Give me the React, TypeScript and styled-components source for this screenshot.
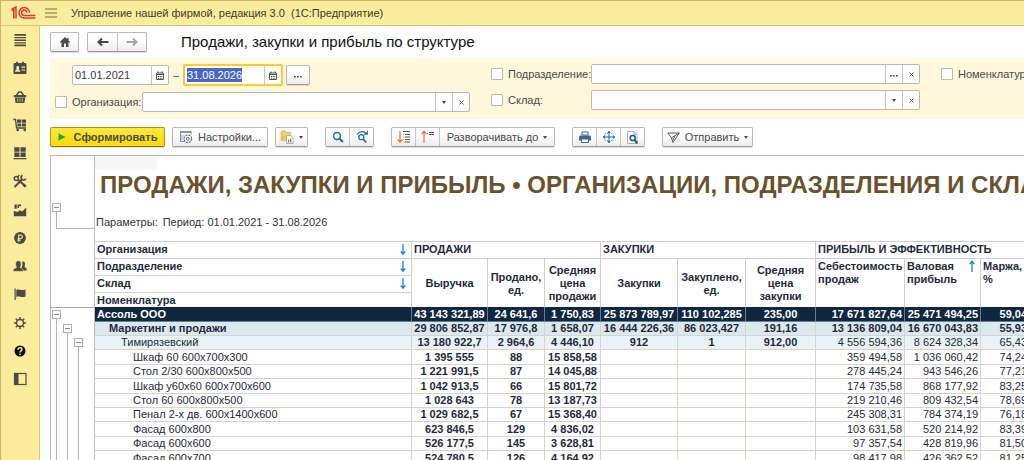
import React, { useEffect, useRef } from 'react';
import styled, { createGlobalStyle, css } from 'styled-components';

const GlobalStyle = createGlobalStyle`
  *, *::before, *::after { box-sizing: border-box; }
  body {
    margin: 0;
    overflow: hidden;
    background: #fff;
    color: #4a4a4a;
    font: 11px/14px "Liberation Sans", Arial, sans-serif;
  }
  button, input { font: inherit; color: inherit; margin: 0; }
  ul { list-style: none; margin: 0; padding: 0; }
`;

/* ---------- application frame ---------- */

const Shell = styled.div`
  display: grid;
  grid-template: 26px minmax(0, 1fr) / 40px minmax(0, 1fr);
  height: 100vh;
`;

const TopBar = styled.header`
  grid-column: 1 / -1;
  display: flex;
  align-items: center;
  padding-left: 10px;
  background: #faeb9d;
  border: solid #cbb463;
  border-width: 1px 0 1px 1px;
  border-bottom-color: #d9c67c;
`;

const MenuButton = styled.button`
  display: flex;
  margin: 0 14px 0 9px;
  padding: 0;
  border: 0;
  background: none;
`;

const AppName = styled.span`
  font-size: 11px;
  color: #3f3c30;
  white-space: pre;
`;

const Sidebar = styled.nav`
  background: #faeb9d;
  border: solid #cbb463;
  border-width: 0 1px;
  border-right-color: #d9c67c;
`;

const SideItem = styled.li`
  display: flex;
  height: 28px;
  &:nth-child(4n + 2) { margin-bottom: 1px; }
`;

const SideLink = styled.a`
  display: flex;
  flex: 1;
  align-items: center;
  justify-content: center;
  color: #4b4a45;
`;

const Main = styled.main`
  display: flex;
  flex-direction: column;
  min-width: 0;
  min-height: 0;
  padding: 6px 0 0 10px;
  overflow: hidden;
`;

const Row = styled.div<{ $gap?: number }>`
  display: flex;
  flex-shrink: 0;
  align-items: center;
  gap: ${(p) => p.$gap ?? 0}px;
`;

const Heading = styled.h1`
  margin: 0 0 0 26px;
  font-size: 15px;
  line-height: 20px;
  font-weight: 400;
  color: #111;
  white-space: nowrap;
`;

/* ---------- buttons ---------- */

const raised = css`
  border: 1px solid #b9b9b9;
  border-bottom-color: #9a9a9a;
  border-radius: 2px;
  background: linear-gradient(#fff 40%, #ececec);
  box-shadow: 0 1px 1px #0002;
`;

const Button = styled.button<{ $width: number; $primary?: boolean }>`
  ${raised}
  display: flex;
  flex-shrink: 0;
  align-items: center;
  justify-content: center;
  gap: 5px;
  width: ${(p) => p.$width}px;
  height: 20px;
  padding: 0;
  font-size: 11px;
  white-space: nowrap;
  ${(p) =>
    p.$primary &&
    css`
      gap: 8px;
      font-weight: 700;
      border-color: #a8961c;
      border-bottom-color: #86770f;
      background: linear-gradient(#ffe83a, #f8da0c);
    `}
`;

const ButtonGroup = styled.div`
  ${raised}
  display: flex;
  flex-shrink: 0;
  height: 20px;
  & > button {
    height: 18px;
    border: 0;
    border-radius: 0;
    background: none;
    box-shadow: none;
  }
  & > button + button { border-left: 1px solid #c4c4c4; }
`;

const Toolbar = styled.div`
  display: flex;
  flex-shrink: 0;
  gap: 17px;
  margin-top: 8px;
`;

const Caret = styled.span`
  border: solid transparent;
  border-width: 3px 2px 0;
  border-top-color: currentColor;
`;

/* ---------- filters ---------- */

const Filters = styled.form`
  display: flex;
  flex-shrink: 0;
  gap: 21px;
  height: 61px;
  margin-top: 6px;
  padding: 6px 0 0 5px;
  overflow: hidden;
  background: #fff8dc;
`;

const FilterColumn = styled.div<{ $width: number }>`
  display: flex;
  flex: 0 0 ${(p) => p.$width}px;
  flex-direction: column;
  gap: 6px;
`;

const DateRow = styled.div`
  display: flex;
  align-items: center;
  gap: 3px;
  height: 22px;
  padding-left: 17px;
`;

const FieldRow = styled.div`
  display: flex;
  align-items: center;
  height: 20px;
`;

const Check = styled.input`
  appearance: none;
  flex: none;
  width: 12px;
  height: 12px;
  border: 1px solid #bdb9aa;
  border-radius: 1px;
  background: #fff;
`;

const FieldLabel = styled.label<{ $width: number }>`
  flex: 0 0 ${(p) => p.$width}px;
  padding-left: 5px;
  white-space: nowrap;
`;

const Field = styled.div<{ $width?: number; $active?: boolean }>`
  display: flex;
  flex: ${(p) => (p.$width ? `0 0 ${p.$width}px` : '1 1 0')};
  min-width: 0;
  height: ${(p) => (p.$active ? 22 : 20)}px;
  border: ${(p) => (p.$active ? '2px solid #fbcc2f' : '1px solid #bcb9ad')};
  border-radius: 2px;
  background: #fff;
  input {
    flex: 1 1 0;
    min-width: 0;
    padding: 0 2px;
    border: 0;
    outline: 0;
    background: none;
    color: #3c3c3c;
  }
  input::selection { background: #4b66c4; color: #fff; }
  button {
    display: flex;
    align-items: center;
    justify-content: center;
    width: 17px;
    padding: 0;
    border: 0;
    border-left: 1px solid #c9c6bb;
    background: none;
  }
`;

const Dash = styled.span`
  width: 8px;
  text-align: center;
`;

/* ---------- report sheet ---------- */

const Sheet = styled.section`
  display: flex;
  flex: 1 1 0;
  min-height: 0;
  margin-top: 8px;
  overflow: hidden;
  border: solid #bdbdbd;
  border-width: 1px 0 0 1px;
`;

const Gutter = styled.div`
  display: flex;
  flex: 0 0 44px;
  flex-direction: column;
  border-right: 1px solid #bdbdbd;
`;

const GutterTop = styled.div`
  height: 152px;
  padding: 47px 0 0 1px;
  border-bottom: 1px solid #a9a9a9;
`;

const Elbow = styled.div`
  height: 17px;
  margin-left: 4px;
  border: solid #b5b5b5;
  border-width: 0 0 1px 1px;
`;

const Branches = styled.div`
  display: flex;
  flex: 1;
  gap: 2px;
  padding: 2px 0 0 1px;
`;

const Branch = styled.div<{ $level: number }>`
  display: flex;
  flex-direction: column;
  align-items: center;
  padding-top: ${(p) => p.$level * 14}px;
  &::after {
    content: '';
    flex: 1;
    width: 1px;
    background: #b5b5b5;
  }
`;

const Toggle = styled.button`
  display: flex;
  align-items: center;
  width: 9px;
  height: 9px;
  padding: 0 1px;
  border: 1px solid #b0b0b0;
  background: #fff;
  &::before {
    content: '';
    flex: 1;
    height: 1px;
    background: #8a8a8a;
  }
`;

const Report = styled.div`
  flex: 1 1 0;
  min-width: 0;
  overflow: hidden;
  white-space: nowrap;
`;

const Corner = styled.div`
  width: 62px;
  height: 14px;
  background: #f7f7f7;
`;

const ReportTitle = styled.h2`
  margin: 0 0 14px 5px;
  font-size: 24px;
  line-height: 30px;
  color: #6b522e;
`;

const Params = styled.div`
  display: flex;
  gap: 5px;
  height: 16px;
  margin: 0 0 11px 1px;
  line-height: 16px;
  color: #333;
`;

const Table = styled.table`
  table-layout: fixed;
  width: 935px;
  border-collapse: separate;
  border-spacing: 0;
  border-top: 1px solid #cfcfcf;
  color: #1f2b3a;
  line-height: 13px;
`;

const HeadCell = styled.th<{ $align?: 'left' | 'center'; $last?: boolean }>`
  height: ${(p) => (p.$last ? 14 : 17)}px;
  padding: 1px 2px 0;
  border: solid #cfcfcf;
  border-width: 0 1px ${(p) => (p.$last ? 0 : 1)}px 0;
  text-align: ${(p) => p.$align ?? 'left'};
  vertical-align: ${(p) => (p.$align === 'center' ? 'middle' : 'top')};
  white-space: pre-line;
`;

const HeadLabel = styled.span`
  display: flex;
  justify-content: space-between;
  padding-right: 3px;
`;

const levels = [
  { bg: '#10273f', fg: '#fff', line: '#6d7a88' },
  { bg: '#dae8f2', fg: '#1f2b3a', line: '#d8d4c8' },
  { bg: '#ebf2f7', fg: '#1f2b3a', line: '#d8d4c8' },
  { bg: '#fff', fg: '#1f2b3a', line: '#d8d4c8' },
];

const BodyRow = styled.tr<{ $level: number }>`
  height: 14px;
  background: ${(p) => levels[p.$level].bg};
  color: ${(p) => levels[p.$level].fg};
  font-weight: ${(p) => (p.$level < 2 ? 700 : 400)};
  &:nth-child(5n + 1), &:nth-child(5n + 4) { height: 15px; }
  th {
    padding: 0 0 0 ${(p) => 2 + p.$level * 12}px;
    font-weight: inherit;
    text-align: left;
  }
  th, td {
    border: solid ${(p) => levels[p.$level].line};
    border-width: 0 1px 1px 0;
  }
`;

const Cell = styled.td<{ $profit: boolean }>`
  padding: ${(p) => (p.$profit ? '0 2px 0 0' : '0')};
  text-align: ${(p) => (p.$profit ? 'right' : 'center')};
  font-weight: ${(p) => (p.$profit ? 'inherit' : 700)};
`;

/* ---------- icons ---------- */

const Svg = ({ w = 14, h = w, children }: { w?: number; h?: number; children: React.ReactNode }) => (
  <svg width={w} height={h} viewBox={`0 0 ${w} ${h}`} fill="none" stroke="none" aria-hidden="true">
    {children}
  </svg>
);

const sideIcons: [string, React.ReactNode][] = [
  ['Главное', <path d="M1.500 1H13v1.700H1.500zM1.500 4H13v1.300H1.500zM1.500 6.600H13v1.300H1.500zM1.500 9.200H13v1.300H1.500zM1.500 11.600H13v1.600H1.500z" fill="currentColor" />],
  ['CRM', <>
    <path d="M2 2h1V.8h2V2h4V.8h2V2h1.500a1 1 0 0 1 1 1v9a1 1 0 0 1-1 1H1.500a1 1 0 0 1-1-1V3a1 1 0 0 1 1-1z" fill="currentColor" />
    <path d="M2 10.800c0-1.600 1-1.700 1.700-2C2.900 7 3.100 5 4.700 5s1.800 2 1 3.800c.7.3 1.500.4 1.500 2zM8.500 5.600H12v1.200H8.500zM8.500 8.400H12v1.200H8.500z" fill="#faeb9d" />
  </>],
  ['Продажи', <>
    <path d="M.8 5h12.400v2.200H.8zM1.800 7.800h10.400L11.400 13H2.600z" fill="currentColor" />
    <path d="M3.500 5.500 5.700 2h2.600l2.200 3.500" stroke="currentColor" strokeWidth="1.500" />
    <path d="M4.700 8.500v3.500M7 8.500v3.500M9.300 8.500v3.500" stroke="#faeb9d" strokeWidth=".7" />
  </>],
  ['Закупки', <>
    <path d="M.3 1.500H2.500l1 8.500H13" stroke="currentColor" strokeWidth="1.300" />
    <path d="M4 1.500h4v3.200H4zM8.700 1.500H13v3.200H8.700zM4.300 5.400H8v3.200H4.300zM8.700 5.400H13v3.200H8.700z" fill="currentColor" />
    <circle cx="4.700" cy="12" r="1.300" fill="currentColor" />
    <circle cx="11.700" cy="12" r="1.300" fill="currentColor" />
  </>],
  ['Склад', <path d="M1.300 1.200h5.200v4.500H1.300zM7.500 1.200h5.200v4.500H7.500zM1.300 6.500h5.200V11H1.300zM7.500 6.500h5.200V11H7.500zM.5 12h13v1.300H.5z" fill="currentColor" />],
  ['Работы', <>
    <path d="M1.500 13 9.500 5M5 5.500l7.500 7" stroke="currentColor" strokeWidth="1.900" />
    <path d="M9.500 1.300a2.500 2.500 0 1 0 3.300 3.500" stroke="currentColor" strokeWidth="1.700" />
    <circle cx="3.300" cy="4.500" r="2" stroke="currentColor" strokeWidth="1.500" />
    <path d="M4.500 3 6.500 1" stroke="currentColor" strokeWidth="1.500" />
    <path d="m9.500 11.500 2-2 2 2.500-1.500 1.500z" fill="currentColor" />
  </>],
  ['Производство', <>
    <path d="M.8 13.200V8l3.700 1L7 7.200 9.200 8.500 13.200 4.500v8.700z" fill="currentColor" />
    <path d="M1.500 1.500h2.300v4.300H1.500zM4.500 1.500H8V3.300H6v1.800H4.500z" fill="currentColor" />
  </>],
  ['Деньги', <>
    <circle cx="7" cy="7" r="5.900" fill="currentColor" />
    <path d="M5.700 10.700V4h1.800a1.800 1.800 0 0 1 0 3.700H4.500M4.500 9.200h3.200" stroke="#faeb9d" strokeWidth="1.100" />
  </>],
  ['Персонал', <>
    <path d="M9.700 11.500c0-1.500-.2-2-1.200-2.500C9.200 7 10 5.500 9 2.800c2-.8 3.700.8 2.800 3.700-.5 1.500 0 2 1.200 2.500.7.500.7 1.500.7 2.500z" fill="currentColor" />
    <path d="M.2 12.300c0-2.500 1-2.700 3.300-3.500.5-.8-.8-1.600-.8-3.800 0-2 .9-3.300 2.600-3.300S8 3 8 5c0 2.200-1.200 3-.8 3.800 2.200.8 3 1 3 3.500z" fill="currentColor" stroke="#faeb9d" strokeWidth=".4" />
  </>],
  ['Компания', <path d="M1.500 1.500h1.200V13H1.500zM3.300 3c2.700-1.700 4.200 1.200 9.200-.5v7c-4.700 1.500-6.200-1-9.200.5z" fill="currentColor" />],
  ['Настройки', <>
    <circle cx="7" cy="7" r="3.500" stroke="currentColor" strokeWidth="1.400" />
    <path d="M7 1v2.200M7 10.800V13M1 7h2.200M10.800 7H13M2.800 2.800l1.500 1.500M9.700 9.700l1.500 1.500M2.800 11.200l1.500-1.500M9.700 4.300l1.500-1.500" stroke="currentColor" strokeWidth="1.500" />
  </>],
  ['Помощь', <>
    <circle cx="7" cy="7" r="5.500" fill="#0c0c0c" />
    <path d="M5 5.700c0-2.600 4-2.400 4-.2C9 7 7 6.800 7 8.600M7 9.600v1.300" stroke="#faeb9d" strokeWidth="1.400" />
  </>],
  ['Панель', <>
    <rect x="1.500" y="1.500" width="11.500" height="11" stroke="currentColor" strokeWidth="1.200" />
    <path d="M1 1h4.500v12H1z" fill="currentColor" />
  </>],
];

const Logo = () => (
  <svg width="25" height="14" viewBox="0 0 25 14" fill="none" stroke="#dc3a30" strokeWidth="1.500" aria-label="1С" role="img">
    <path d="M.8 4.800 2.800 3.300V12.500M.5 3.500 5 1V12.500" />
    <path d="M18.500 6.500a5.200 5.200 0 1 0-5.200 5.500H24.500M16 6.500a2.700 2.700 0 1 0-2.700 3H24.500" />
  </svg>
);

const HomeIcon = () => (
  <Svg w={12}><path d="M6 1 .8 6l.9.8.8-.7V11H5V7.500h2V11h2.500V6.100l.8.700.9-.8-1.700-1.600V1.800H8.200v1.200z" fill="#4a4a4a" /></Svg>
);
const ArrowIcon = ({ back }: { back?: boolean }) => (
  <Svg w={12}>
    <path d={back ? 'M11.500 6H2M5 2.500 1.500 6 5 9.500' : 'M.5 6H10M7 2.500 10.500 6 7 9.500'} stroke={back ? '#444' : '#a6a6a6'} strokeWidth="2" />
  </Svg>
);
const CalendarIcon = () => (
  <Svg w={8} h={9}>
    <path d="M.5 2h7v6.500h-7zM.5 3.500h7M2 .3v2M6 .3v2" stroke="#555" />
    <path d="M2 5h1v1H2zM3.700 5h1v1h-1zM5.300 5h1v1h-1zM2 6.700h1v1H2zM3.700 6.700h1v1h-1zM5.300 6.700h1v1h-1z" fill="#444" />
  </Svg>
);
const CrossIcon = () => <Svg w={5}><path d="m.5.5 4 4M4.500.5l-4 4" stroke="#555" /></Svg>;
const DotsIcon = () => <Svg w={8} h={6}><path d="M0 4h1.700v1.500H0zM3 4h1.700v1.500H3zM6 4h1.700v1.500H6z" fill="#444" /></Svg>;
const PlayIcon = () => <Svg w={8} h={8}><path d="m.5.300 7 3.700-7 3.700z" fill="#28a80f" /></Svg>;
const SettingsIcon = () => (
  <Svg w={14}>
    <path d="M6 11.500H1.500v-10h10.500v3" stroke="#7f95b0" />
    <path d="M1 1h11.500v2H1z" fill="#7f95b0" />
    <path d="M3 4.500v6M5 4.500v1M2 6h3M2 8.500h2" stroke="#b4c3d6" />
    <circle cx="8.800" cy="8.800" r="3.800" fill="#fff" stroke="#5f6469" strokeWidth="1.200" strokeDasharray="2 1" />
    <circle cx="8.800" cy="8.800" r="1.500" stroke="#5f6469" />
  </Svg>
);
const FolderIcon = () => (
  <Svg w={14}>
    <path d="M1 10.500V2l1-1h3.500l1 1.300h4.500v8.200z" fill="#efc55c" stroke="#dba93a" strokeWidth=".6" />
    <path d="M1.500 4h9" stroke="#f8e09a" />
    <path d="M6.500 5.500h4l2.500 2.200v5.800H6.500z" fill="#fff" stroke="#9aa3ab" strokeWidth=".8" />
    <path d="M8 9.500h1.300v3H8z" fill="#e2603f" /><path d="M10 8.500h1.300v4H10z" fill="#4f9b58" />
  </Svg>
);
const SearchIcon = () => (
  <Svg w={12}>
    <circle cx="5" cy="5" r="3.400" stroke="#226a9d" strokeWidth="1.500" />
    <path d="m7.500 7.500 3.500 3.500" stroke="#226a9d" strokeWidth="2" />
  </Svg>
);
const SearchNextIcon = () => (
  <Svg w={14}>
    <path d="M2 4.500C4 1 9 .7 11.500 3.300M12.300.8v3.400H9" stroke="#226a9d" strokeWidth="1.200" />
    <circle cx="6.300" cy="7.200" r="2.500" stroke="#226a9d" strokeWidth="1.300" />
    <path d="m8.200 9.200 3 3.300" stroke="#226a9d" strokeWidth="1.800" />
  </Svg>
);
const CollapseIcon = () => (
  <Svg w={14}>
    <path d="M3 1v11M.8 9.500 3 12.200l2.200-2.700" stroke="#e8743f" strokeWidth="1.200" />
    <path d="M6 1.500h7M8 4.500h5M8 7h5M8 9.500h5M8 12h5" stroke="#555" /><path d="M6 4.500h1M6 7h1M6 9.500h1M6 12h1" stroke="#aaa" />
  </Svg>
);
const ExpandIcon = () => (
  <Svg w={14}>
    <path d="M3 13V1.500M.8 4 3 1.300 5.200 4" stroke="#e8743f" strokeWidth="1.200" />
    <path d="M6 3.500h1M8 2.500h5M8 4.500h5" stroke="#555" />
  </Svg>
);
const PrintIcon = () => (
  <Svg w={12}>
    <path d="M3 1h6v3H3z" fill="#fff" stroke="#41678b" />
    <path d="M1 4.500h10l1 1V9.500H0V5.500z" fill="#41678b" />
    <path d="M2.500 8h7v3.500h-7z" fill="#fff" stroke="#41678b" />
  </Svg>
);
const FitIcon = () => (
  <Svg w={12}>
    <path d="M6 0v12M0 6h12" stroke="#226a9d" />
    <path d="m4 2 2-2 2 2M4 10l2 2 2-2M2 4 0 6l2 2M10 4l2 2-2 2" fill="#226a9d" />
    <path d="M2 2.500h8v7H2z" stroke="#7da6c5" strokeDasharray="1 1" />
  </Svg>
);
const PreviewIcon = () => (
  <Svg w={13}>
    <path d="M1.500 12.500V.5h6.500l3 3v9z" fill="#fff" stroke="#9db4c8" /><path d="M8 .5v3h3" stroke="#9db4c8" />
    <circle cx="6.700" cy="7" r="2.500" stroke="#175a8d" strokeWidth="1.500" />
    <path d="m8.500 9 3 3.500" stroke="#175a8d" strokeWidth="2" />
  </Svg>
);
const SendIcon = () => (
  <Svg w={13}>
    <path d="M.8 2h11.500L6 11.500 4.500 6.800zM4.500 6.800 12.300 2M5.700 9.500 8 5" stroke="#555" />
  </Svg>
);
const SortIcon = ({ up }: { up?: boolean }) => (
  <Svg w={6} h={12}>
    <path d={up ? 'M3 12V1.500M.8 4 3 1.300 5.200 4' : 'M3 1v10M.8 8.500 3 11.200l2.200-2.700'} stroke="#1583ee" strokeWidth="1.300" />
  </Svg>
);

/* ---------- data ---------- */

const columnWidths = [317, 76, 57, 56, 77, 68, 70, 89, 76, 49];

type Line = [level: number, name: string, ...values: string[]];

const lines: Line[] = [
  [0, 'Ассоль ООО', '43 143 321,89', '24 641,6', '1 750,83', '25 873 789,97', '110 102,285', '235,00', '17 671 827,64', '25 471 494,25', '59,04'],
  [1, 'Маркетинг и продажи', '29 806 852,87', '17 976,8', '1 658,07', '16 444 226,36', '86 023,427', '191,16', '13 136 809,04', '16 670 043,83', '55,93'],
  [2, 'Тимирязевский', '13 180 922,7', '2 964,6', '4 446,10', '912', '1', '912,00', '4 556 594,36', '8 624 328,34', '65,43'],
  [3, 'Шкаф 60 600х700х300', '1 395 555', '88', '15 858,58', '', '', '', '359 494,58', '1 036 060,42', '74,24'],
  [3, 'Стол 2/30 600х800х500', '1 221 991,5', '87', '14 045,88', '', '', '', '278 445,24', '943 546,26', '77,21'],
  [3, 'Шкаф у60х60 600х700х600', '1 042 913,5', '66', '15 801,72', '', '', '', '174 735,58', '868 177,92', '83,25'],
  [3, 'Стол 60 600х800х500', '1 028 643', '78', '13 187,73', '', '', '', '219 210,46', '809 432,54', '78,69'],
  [3, 'Пенал 2-х дв. 600х1400х600', '1 029 682,5', '67', '15 368,40', '', '', '', '245 308,31', '784 374,19', '76,18'],
  [3, 'Фасад 600х800', '623 846,5', '129', '4 836,02', '', '', '', '103 631,58', '520 214,92', '83,39'],
  [3, 'Фасад 600х600', '526 177,5', '145', '3 628,81', '', '', '', '97 357,54', '428 819,96', '81,50'],
  [3, 'Фасад 600х700', '524 780,5', '126', '4 164,92', '', '', '', '98 417,98', '426 362,52', '81,25'],
];

/* ---------- parts ---------- */

const FilterField = ({ id, label, labelWidth, dots }: { id: string; label: string; labelWidth: number; dots?: boolean }) => (
  <FieldRow>
    <Check type="checkbox" id={`${id}-on`} aria-label={label} />
    <FieldLabel htmlFor={id} $width={labelWidth}>{label}</FieldLabel>
    <Field>
      <input id={id} type="text" />
      <button type="button" aria-label="Выбрать">{dots ? <DotsIcon /> : <Caret />}</button>
      <button type="button" aria-label="Очистить"><CrossIcon /></button>
    </Field>
  </FieldRow>
);

export default function App() {
  const endDate = useRef<HTMLInputElement>(null);
  useEffect(() => {
    endDate.current?.focus();
    endDate.current?.select();
  }, []);

  return (
    <>
      <GlobalStyle />
      <Shell>
        <TopBar>
          <Logo />
          <MenuButton aria-label="Меню">
            <Svg w={12} h={10}><path d="M0 1h12M0 5h12M0 9h12" stroke="#77704a" strokeWidth="1.200" /></Svg>
          </MenuButton>
          <AppName>{'Управление нашей фирмой, редакция 3.0  (1С:Предприятие)'}</AppName>
        </TopBar>

        <Sidebar>
          <ul>
            {sideIcons.map(([name, icon]) => (
              <SideItem key={name}>
                <SideLink href="#" aria-label={name}><Svg>{icon}</Svg></SideLink>
              </SideItem>
            ))}
          </ul>
        </Sidebar>

        <Main>
          <Row $gap={8}>
            <Button $width={29} aria-label="Начальная страница"><HomeIcon /></Button>
            <ButtonGroup>
              <Button $width={29} aria-label="Назад"><ArrowIcon back /></Button>
              <Button $width={29} aria-label="Вперед"><ArrowIcon /></Button>
            </ButtonGroup>
            <Heading>Продажи, закупки и прибыль по структуре</Heading>
          </Row>

          <Filters>
            <FilterColumn $width={415}>
              <DateRow>
                <Field $width={97}>
                  <input type="text" aria-label="Начало периода" defaultValue="01.01.2021" />
                  <button type="button" aria-label="Календарь"><CalendarIcon /></button>
                </Field>
                <Dash>–</Dash>
                <Field $width={100} $active>
                  <input ref={endDate} type="text" aria-label="Конец периода" defaultValue="31.08.2026" />
                  <button type="button" aria-label="Календарь"><CalendarIcon /></button>
                </Field>
                <Button type="button" $width={24} aria-label="Период"><DotsIcon /></Button>
              </DateRow>
              <FilterField id="org" label="Организация:" labelWidth={75} />
            </FilterColumn>
            <FilterColumn $width={429}>
              <FilterField id="dept" label="Подразделение:" labelWidth={88} dots />
              <FilterField id="store" label="Склад:" labelWidth={88} />
            </FilterColumn>
            <FilterColumn $width={429}>
              <FilterField id="item" label="Номенклатура:" labelWidth={88} dots />
            </FilterColumn>
          </Filters>

          <Toolbar>
            <Row $gap={7}>
              <Button $width={115} $primary><PlayIcon />Сформировать</Button>
              <Button $width={96}><SettingsIcon />Настройки...</Button>
              <Button $width={33} aria-label="Варианты отчета"><FolderIcon /><Caret /></Button>
            </Row>
            <ButtonGroup>
              <Button $width={23} aria-label="Найти"><SearchIcon /></Button>
              <Button $width={24} aria-label="Найти далее"><SearchNextIcon /></Button>
            </ButtonGroup>
            <ButtonGroup>
              <Button $width={23} aria-label="Свернуть"><CollapseIcon /></Button>
              <Button $width={24} aria-label="Развернуть"><ExpandIcon /></Button>
              <Button $width={115}>Разворачивать до<Caret /></Button>
            </ButtonGroup>
            <ButtonGroup>
              <Button $width={23} aria-label="Печать"><PrintIcon /></Button>
              <Button $width={24} aria-label="Масштаб"><FitIcon /></Button>
              <Button $width={24} aria-label="Предварительный просмотр"><PreviewIcon /></Button>
            </ButtonGroup>
            <Button $width={91}><SendIcon />Отправить<Caret /></Button>
          </Toolbar>

          <Sheet>
            <Gutter>
              <GutterTop>
                <Toggle aria-label="Свернуть заголовок" />
                <Elbow />
              </GutterTop>
              <Branches>
                {[0, 1, 2].map((level) => (
                  <Branch key={level} $level={level}>
                    <Toggle aria-label={`Свернуть уровень ${level + 1}`} />
                  </Branch>
                ))}
              </Branches>
            </Gutter>
            <Report>
              <Corner />
              <ReportTitle>ПРОДАЖИ, ЗАКУПКИ И ПРИБЫЛЬ • ОРГАНИЗАЦИИ, ПОДРАЗДЕЛЕНИЯ И СКЛАДЫ</ReportTitle>
              <Params>
                <span>Параметры:</span>
                <span>Период: 01.01.2021 - 31.08.2026</span>
              </Params>
              <Table>
                <colgroup>
                  {columnWidths.map((width, i) => <col key={i} style={{ width }} />)}
                </colgroup>
                <thead>
                  <tr>
                    <HeadCell><HeadLabel>Организация<SortIcon /></HeadLabel></HeadCell>
                    <HeadCell colSpan={3}>ПРОДАЖИ</HeadCell>
                    <HeadCell colSpan={3}>ЗАКУПКИ</HeadCell>
                    <HeadCell colSpan={3}>ПРИБЫЛЬ И ЭФФЕКТИВНОСТЬ</HeadCell>
                  </tr>
                  <tr>
                    <HeadCell><HeadLabel>Подразделение<SortIcon /></HeadLabel></HeadCell>
                    {['Выручка', 'Продано,\nед.', 'Средняя\nцена\nпродажи', 'Закупки', 'Закуплено,\nед.', 'Средняя\nцена\nзакупки'].map((text) => (
                      <HeadCell key={text} rowSpan={3} $align="center" $last>{text}</HeadCell>
                    ))}
                    <HeadCell rowSpan={3} $last>{'Себестоимость\nпродаж'}</HeadCell>
                    <HeadCell rowSpan={3} $last><HeadLabel>{'Валовая\nприбыль'}<SortIcon up /></HeadLabel></HeadCell>
                    <HeadCell rowSpan={3} $last>{'Маржа,\n%'}</HeadCell>
                  </tr>
                  <tr><HeadCell><HeadLabel>Склад<SortIcon /></HeadLabel></HeadCell></tr>
                  <tr><HeadCell $last>Номенклатура</HeadCell></tr>
                </thead>
                <tbody>
                  {lines.map(([level, name, ...values]) => (
                    <BodyRow key={name} $level={level}>
                      <th scope="row">{name}</th>
                      {values.map((value, i) => <Cell key={i} $profit={i > 5}>{value}</Cell>)}
                    </BodyRow>
                  ))}
                </tbody>
              </Table>
            </Report>
          </Sheet>
        </Main>
      </Shell>
    </>
  );
}
